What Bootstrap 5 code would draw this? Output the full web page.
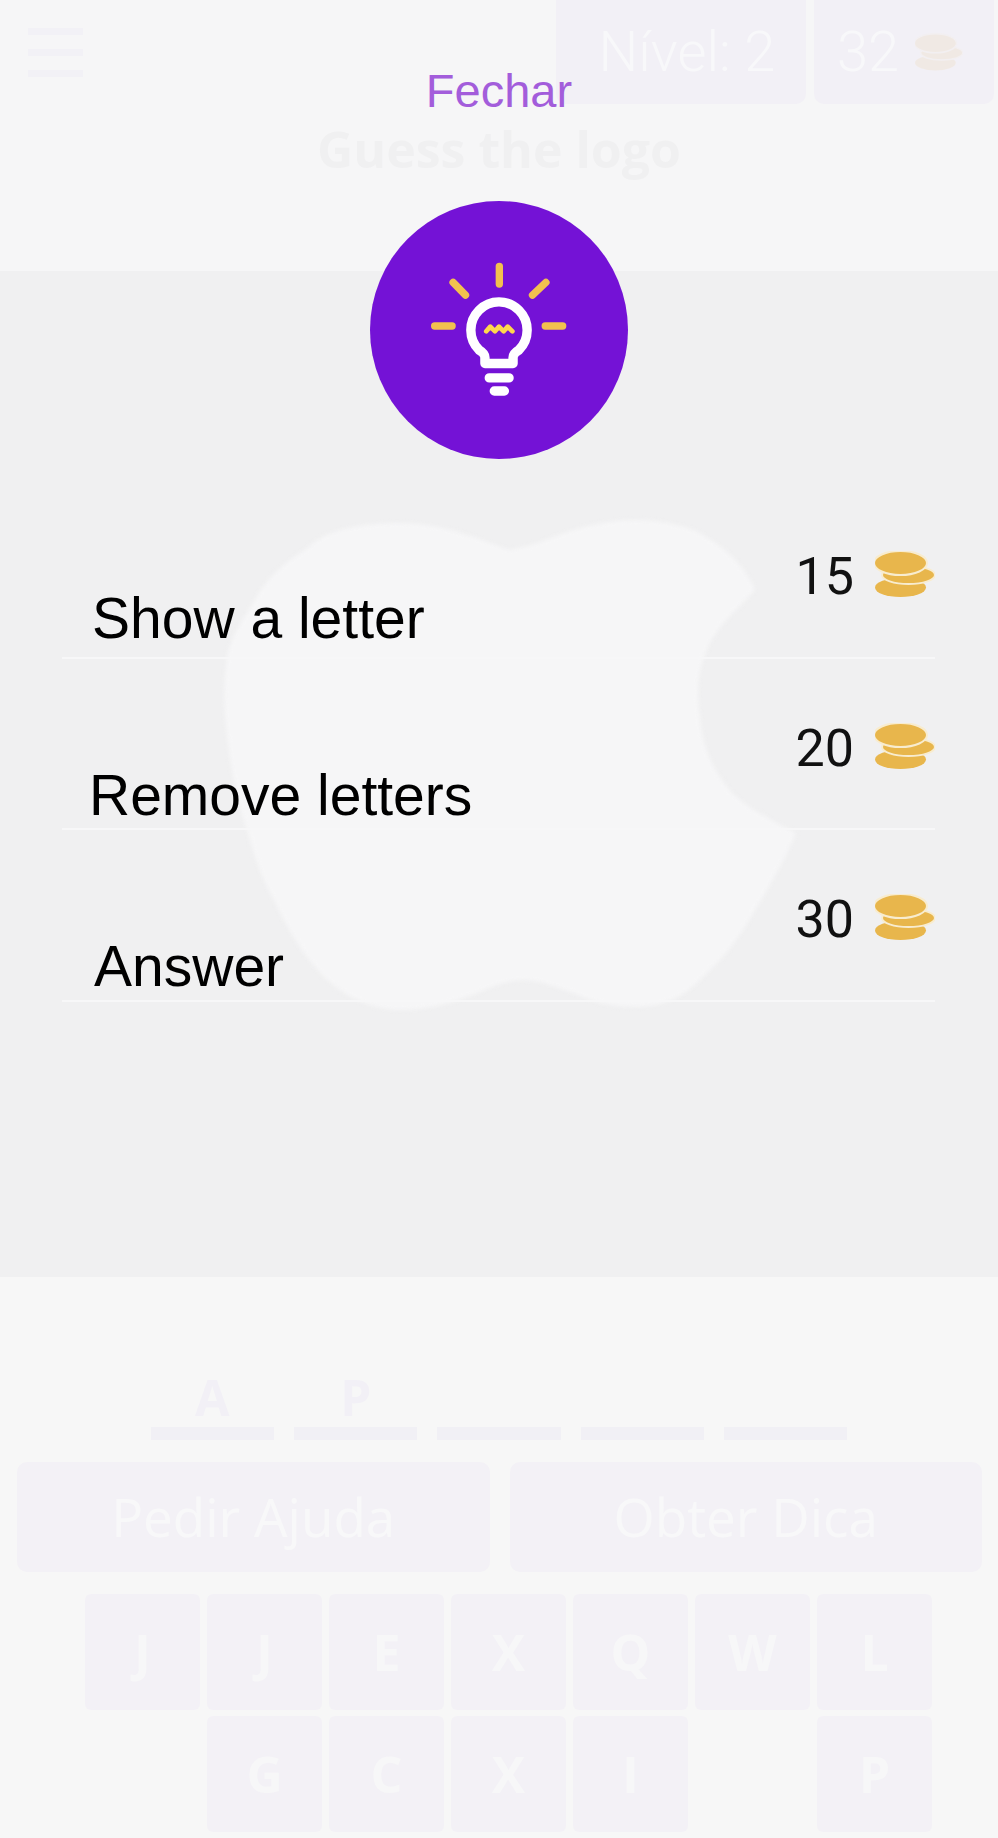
<!DOCTYPE html>
<html lang="en">
<head>
  <meta charset="UTF-8" />
  <meta name="viewport" content="width=device-width, initial-scale=1" />
  <title>Guess the logo</title>
  <link href="https://cdn.jsdelivr.net/npm/bootstrap@5.3.0/dist/css/bootstrap.min.css" rel="stylesheet" />
  <style>
    body { background: #f7f7f7; font-family: "Open Sans", sans-serif; }
    .game-page { width: 998px; height: 1838px; overflow: hidden; }

    /* game behind the sheet, almost washed out */
    .game-top { height: 271px; background: #f6f6f7; }
    .menu-lines { width: 55px; margin: 28px 0 0 28px; gap: 14px; }
    .menu-lines span { height: 7px; background: #f2f1f6; }
    .stat-wrap { gap: 8px; margin-right: 4px; }
    .stat-box { height: 104px; background: #f2f0f6; border-radius: 0 0 10px 10px; font-family: Roboto, sans-serif; font-size: 56px; font-weight: 300; color: #f8f8fa; }
    .stat-level { width: 250px; padding-left: 12px; }
    .stat-coins { width: 180px; gap: 16px; padding-right: 8px; }
    .coin-faded { opacity: .1; }
    .game-title { font-size: 50px; line-height: 60px; font-weight: 700; color: #f0f0f1; margin-top: 15px; }
    .game-panel { height: 1006px; background: #f0f0f1; }
    .apple-shape { position: absolute; left: 0; top: 0; filter: blur(2px); }

    .game-bottom { height: 561px; background: #f7f7f7; }
    .answer-row { gap: 20px; padding-top: 90px; }
    .answer-slot { width: 123.4px; }
    .answer-letter { height: 60px; font-size: 50px; line-height: 60px; font-weight: 700; color: #f2f0f6; text-align: center; }
    .answer-line { height: 13px; background: #f1f0f5; }
    .help-row { gap: 20px; margin: 22px 16px 0 17px; }
    .help-btn { flex: 1; height: 110px; background: #f3f1f6; border: 0; border-radius: 10px; color: #f8f8f9; font-family: "Open Sans", sans-serif; font-size: 53px; }
    .key-grid { display: grid; grid-template-columns: repeat(7, 115px); grid-auto-rows: 116px; column-gap: 7px; row-gap: 6px; margin: 22px 0 0 85px; }
    .key-cell { background: #f3f1f6; border-radius: 6px; color: #f7f7f8; font-size: 50px; font-weight: 700; }
    .key-blank { background: transparent; }

    /* help sheet */
    .help-sheet { position: absolute; left: 0; top: 0; width: 998px; }
    .close-link { font-family: "Liberation Sans", sans-serif; font-size: 47px; line-height: 52px; color: #a35ddb; margin-top: 65px; text-decoration: none; }
    .bulb-circle { width: 258px; height: 258px; margin: 84px auto 0; }
    .option-list { margin: 28px 63px 0 62px; --bs-list-group-bg: transparent; --bs-list-group-border-color: #f7f7f8; --bs-list-group-border-width: 2px; }
    .option-item { height: 171.5px; padding: 0; }
    .option-list .option-item:last-child { border-bottom-width: 2px; border-bottom-style: solid; }
    .option-name { font-family: "Liberation Sans", sans-serif; font-size: 57px; line-height: 66px; color: #000; }
    .name-show { margin: 0 0 6px 30px; }
    .name-remove { margin: 0 0 0 27px; }
    .name-answer { margin: 0 0 1px 32px; }
    .option-price { gap: 20px; margin-top: 11px; font-family: Roboto, sans-serif; font-size: 52px; line-height: 60px; color: #111; }
    .option-price svg { margin: -6px 0 0 1px; }
  </style>
</head>
<body>
  <svg width="0" height="0" class="d-block">
    <symbol id="coins" viewBox="0 0 60 46">
      <ellipse cx="25.5" cy="36.5" rx="25.5" ry="9.5" fill="#e8b64c" />
      <ellipse cx="33.5" cy="24" rx="26.5" ry="9" fill="#e8b64c" stroke="#f8eccf" stroke-width="2" />
      <ellipse cx="25.5" cy="12" rx="26.5" ry="12" fill="#e8b64c" stroke="#f8eccf" stroke-width="2" />
    </symbol>
  </svg>

  <div class="game-page position-relative">
    <!-- game screen -->
    <div class="game-top">
      <div class="d-flex justify-content-between align-items-start">
        <div class="menu-lines d-flex flex-column">
          <span class="d-block"></span>
          <span class="d-block"></span>
          <span class="d-block"></span>
        </div>
        <div class="stat-wrap d-flex">
          <div class="stat-box stat-level d-flex align-items-center justify-content-center">Nível: 2</div>
          <div class="stat-box stat-coins d-flex align-items-center justify-content-center">
            <span>32</span>
            <svg class="coin-faded" width="48" height="40"><use href="#coins" /></svg>
          </div>
        </div>
      </div>
      <div class="game-title text-center">Guess the logo</div>
    </div>

    <div class="game-panel position-relative">
      <svg class="apple-shape" width="998" height="1006" viewBox="0 271 998 1006">
        <path fill="#f6f6f7" d="M509 550 C470 535 435 522 395 523 C355 524 325 530 305 550 C280 565 262 585 255 600 C235 630 226 650 226 667 C222 700 226 730 229 750 C234 790 240 810 248 833 C255 860 263 880 274 900 C290 935 310 965 331 983 C355 1003 380 1010 401 1010 C430 1010 455 1002 477 993 C495 985 510 980 522 980 C540 980 555 987 573 993 C595 1003 615 1007 636 1007 C665 1007 685 995 700 980 C722 960 738 940 751 917 C770 885 785 860 796 833 C770 820 748 808 732 793 C712 770 702 745 700 717 C696 690 698 670 707 650 C715 628 735 612 755 590 C745 565 725 548 700 533 C680 524 658 520 636 520 C610 520 590 525 573 530 C550 538 530 547 509 550 Z" />
      </svg>
    </div>

    <div class="game-bottom">
      <div class="answer-row d-flex justify-content-center">
        <div class="answer-slot"><div class="answer-letter">A</div><div class="answer-line"></div></div>
        <div class="answer-slot"><div class="answer-letter">P</div><div class="answer-line"></div></div>
        <div class="answer-slot"><div class="answer-letter"></div><div class="answer-line"></div></div>
        <div class="answer-slot"><div class="answer-letter"></div><div class="answer-line"></div></div>
        <div class="answer-slot"><div class="answer-letter"></div><div class="answer-line"></div></div>
      </div>
      <div class="help-row d-flex">
        <button type="button" class="btn help-btn">Pedir Ajuda</button>
        <button type="button" class="btn help-btn">Obter Dica</button>
      </div>
      <div class="key-grid">
        <div class="key-cell d-flex align-items-center justify-content-center">J</div>
        <div class="key-cell d-flex align-items-center justify-content-center">J</div>
        <div class="key-cell d-flex align-items-center justify-content-center">E</div>
        <div class="key-cell d-flex align-items-center justify-content-center">X</div>
        <div class="key-cell d-flex align-items-center justify-content-center">Q</div>
        <div class="key-cell d-flex align-items-center justify-content-center">W</div>
        <div class="key-cell d-flex align-items-center justify-content-center">L</div>
        <div class="key-cell key-blank"></div>
        <div class="key-cell d-flex align-items-center justify-content-center">G</div>
        <div class="key-cell d-flex align-items-center justify-content-center">C</div>
        <div class="key-cell d-flex align-items-center justify-content-center">X</div>
        <div class="key-cell d-flex align-items-center justify-content-center">I</div>
        <div class="key-cell key-blank"></div>
        <div class="key-cell d-flex align-items-center justify-content-center">P</div>
      </div>
    </div>

    <!-- help sheet on top -->
    <div class="help-sheet">
      <div class="text-center"><a href="#" class="close-link d-inline-block">Fechar</a></div>
      <svg class="bulb-circle d-block" viewBox="65 35 770 770">
        <circle cx="450" cy="420" r="385" fill="#7412d6" />
        <g fill="none" stroke="#f2c14e" stroke-width="22" stroke-linecap="round">
          <path d="M451 230V283M313 278L350 316M590 278L550 316M258 408H310M588 408H640" />
        </g>
        <path d="M408 520H492V502Q492 490 509 480A84 84 0 1 0 391 480Q408 490 408 502Z" fill="none" stroke="#fff" stroke-width="28" stroke-linejoin="round" />
        <path d="M421 563H480M436 602H466" fill="none" stroke="#fff" stroke-width="28" stroke-linecap="round" />
        <path d="M412 424l12-14l14 14l12-14l14 14l12-14l14 14" fill="none" stroke="#ffd84d" stroke-width="14" stroke-linecap="round" stroke-linejoin="round" />
      </svg>
      <div class="list-group list-group-flush option-list">
        <div class="list-group-item option-item d-flex justify-content-between">
          <div class="option-name name-show align-self-end">Show a letter</div>
          <div class="option-price d-flex align-items-center">15 <svg width="60" height="46"><use href="#coins" /></svg></div>
        </div>
        <div class="list-group-item option-item d-flex justify-content-between">
          <div class="option-name name-remove align-self-end">Remove letters</div>
          <div class="option-price d-flex align-items-center">20 <svg width="60" height="46"><use href="#coins" /></svg></div>
        </div>
        <div class="list-group-item option-item d-flex justify-content-between">
          <div class="option-name name-answer align-self-end">Answer</div>
          <div class="option-price d-flex align-items-center">30 <svg width="60" height="46"><use href="#coins" /></svg></div>
        </div>
      </div>
    </div>
  </div>

  <script src="https://cdn.jsdelivr.net/npm/bootstrap@5.3.0/dist/js/bootstrap.bundle.min.js"></script>
</body>
</html>
